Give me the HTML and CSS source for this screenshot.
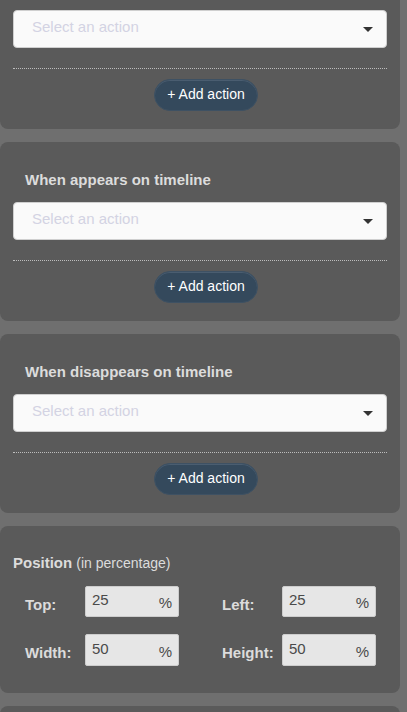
FILE: index.html
```html
<!DOCTYPE html>
<html>
<head>
<meta charset="utf-8">
<link rel="stylesheet" href="styles.css">
</head>
<body>
<div class="page">
  <section class="panel panel-first">
    <div class="select"><span class="placeholder">Select an action</span><span class="caret"></span></div>
    <div class="divider"></div>
    <div class="btn-row"><button class="add-btn">+ Add action</button></div>
  </section>
  <section class="panel">
    <h3 class="heading">When appears on timeline</h3>
    <div class="select"><span class="placeholder">Select an action</span><span class="caret"></span></div>
    <div class="divider"></div>
    <div class="btn-row"><button class="add-btn">+ Add action</button></div>
  </section>
  <section class="panel">
    <h3 class="heading">When disappears on timeline</h3>
    <div class="select"><span class="placeholder">Select an action</span><span class="caret"></span></div>
    <div class="divider"></div>
    <div class="btn-row"><button class="add-btn">+ Add action</button></div>
  </section>
  <section class="panel panel-pos">
    <h3 class="pos-title">Position <span class="pos-sub">(in percentage)</span></h3>
    <div class="pos-grid">
      <div class="field"><span class="label">Top:</span><div class="num"><span>25</span><span>%</span></div></div>
      <div class="field"><span class="label">Left:</span><div class="num"><span>25</span><span>%</span></div></div>
      <div class="field"><span class="label">Width:</span><div class="num num-tall"><span>50</span><span>%</span></div></div>
      <div class="field"><span class="label">Height:</span><div class="num num-tall"><span>50</span><span>%</span></div></div>
    </div>
  </section>
  <section class="panel panel-last"></section>
</div>
</body>
</html>
```
FILE: styles.css
```css
html, body {
  margin: 0;
  padding: 0;
  background: #6f6f6f;
  font-family: "Liberation Sans", Arial, sans-serif;
}
.page {
  width: 400px;
  display: flex;
  flex-direction: column;
  gap: 13px;
  height: 712px;
  overflow: hidden;
}
.panel {
  background: #5a5a5a;
  border-radius: 8px;
  padding: 29px 13px 18px;
  flex-shrink: 0;
}
.panel-first {
  padding-top: 10px;
  border-top-left-radius: 0;
  border-top-right-radius: 0;
}
.heading {
  margin: 0 0 14px 12px;
  font-size: 15px;
  line-height: 17px;
  font-weight: bold;
  color: #dcdcdc;
}
.select {
  height: 36px;
  background: #fafafa;
  border: 1px solid #cfcfcf;
  border-radius: 4px;
  display: flex;
  align-items: center;
  justify-content: space-between;
  padding: 0 13px 0 18px;
}
.placeholder {
  font-size: 15px;
  color: #d3d3e3;
  margin-top: -5px;
}
.caret {
  width: 0;
  height: 0;
  border-left: 5px solid transparent;
  border-right: 5px solid transparent;
  border-top: 5px solid #333;
  margin-top: 1px;
}
.divider {
  margin-top: 20px;
  border-top: 1px dotted #bdbdbd;
}
.btn-row {
  display: flex;
  justify-content: center;
  margin-top: 10px;
  padding-left: 12px;
}
.add-btn {
  width: 104px;
  height: 32px;
  border-radius: 16px;
  background: #34495c;
  border: 1px solid #3e5163;
  box-shadow: inset 0 1px 0 #4a5d70;
  color: #fff;
  font-family: "Liberation Sans", Arial, sans-serif;
  font-size: 14px;
  padding: 0 0 2px 0;
}
.panel-pos {
  padding-top: 28px;
  padding-bottom: 27px;
}
.pos-title {
  margin: 0 0 14px 0;
  font-size: 15px;
  line-height: 17px;
  font-weight: bold;
  color: #dcdcdc;
}
.pos-sub {
  font-weight: normal;
  font-size: 14px;
  color: #dcdcdc;
}
.pos-grid {
  display: grid;
  grid-template-columns: 154px 154px;
  column-gap: 43px;
  row-gap: 17px;
  padding-left: 12px;
}
.field {
  display: flex;
  align-items: center;
}
.label {
  width: 60px;
  font-size: 15px;
  font-weight: bold;
  color: #dcdcdc;
  margin-top: 5px;
}
.num {
  background: #e6e6e6;
  border: 1px solid #cdcdcd;
  border-radius: 2px;
  display: flex;
  justify-content: space-between;
  align-items: center;
  padding: 0 6px 0 6px;
  box-sizing: border-box;
  width: 94px;
  height: 31px;
  font-size: 15px;
  color: #4a4a4a;
}
.num-tall {
  height: 32px;
}
.num span:first-child {
  margin-top: -4px;
}
.num span:last-child {
  margin-top: 2px;
}
.panel-last {
  height: 40px;
  padding: 0;
  border-bottom-left-radius: 0;
  border-bottom-right-radius: 0;
}
```
